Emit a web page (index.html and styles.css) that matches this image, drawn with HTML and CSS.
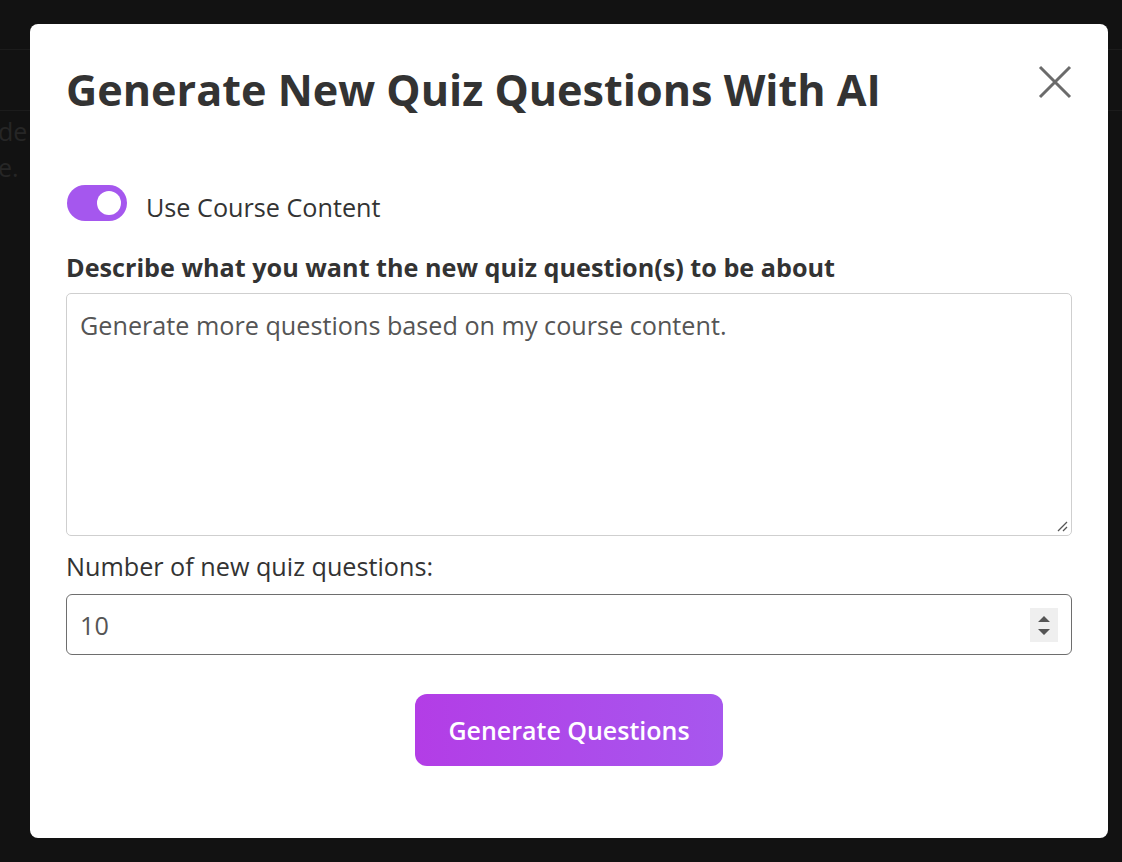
FILE: index.html
```html
<!DOCTYPE html>
<html lang="en">
<head>
<meta charset="utf-8">
<title>Generate New Quiz Questions With AI</title>
<link rel="stylesheet" href="styles.css">
</head>
<body>
<div class="backdrop">
  <div class="bg-page">
    <div class="bg-line l1"></div>
    <div class="bg-line l2"></div>
    <p class="bg-text">de<br>e.</p>
  </div>
  <div class="modal">
    <div class="modal-head">
      <h1 class="title">Generate New Quiz Questions With AI</h1>
      <button class="close" aria-label="Close">
        <svg width="34" height="34" viewBox="0 0 34 34"><path d="M2 2 L32 32 M32 2 L2 32" stroke="#6b6b6b" stroke-width="3" fill="none"/></svg>
      </button>
    </div>
    <div class="toggle-row">
      <span class="toggle"><span class="knob"></span></span>
      <span class="toggle-label">Use Course Content</span>
    </div>
    <label class="field-label">Describe what you want the new quiz question(s) to be about</label>
    <div class="textarea">
      <span class="ta-text">Generate more questions based on my course content.</span>
      <svg class="resize" width="12" height="12" viewBox="0 0 12 12"><path d="M11 2 L2 11 M11 7 L7 11" stroke="#555" stroke-width="1.3" fill="none"/></svg>
    </div>
    <div class="num-label">Number of new quiz questions:</div>
    <div class="num-input">
      <span class="num-val">10</span>
      <span class="spinner">
        <svg width="28" height="34" viewBox="0 0 28 34"><path d="M8 14 L14 8 L20 14 Z M8 21 L20 21 L14 27 Z" fill="#555"/></svg>
      </span>
    </div>
    <div class="actions">
      <button class="primary">Generate Questions</button>
    </div>
  </div>
</div>
</body>
</html>
```
FILE: styles.css
```css
* { box-sizing: border-box; }
html, body { margin: 0; padding: 0; }
body {
  background: #121212;
  font-family: "Open Sans", "Noto Sans", sans-serif;
  width: 1122px;
  height: 862px;
  overflow: hidden;
}
.backdrop {
  position: relative;
  width: 1122px;
  height: 862px;
  padding: 24px 14px 24px 30px;
}
.bg-page {
  position: absolute;
  left: 0; top: 0; right: 0; bottom: 0;
}
.bg-line {
  position: absolute;
  left: 0; width: 100%;
  height: 1px;
  background: #1c1c1c;
}
.l1 { top: 49px; }
.l2 { top: 110px; }
.bg-text {
  position: absolute;
  left: -2px;
  top: 113px;
  margin: 0;
  font-size: 25px;
  line-height: 36px;
  color: #262626;
}
.modal {
  position: relative;
  background: #fff;
  border-radius: 8px;
  width: 1078px;
  height: 814px;
  padding: 38px 36px 0 36px;
  display: flex;
  flex-direction: column;
}
.modal-head {
  display: flex;
  justify-content: space-between;
  align-items: flex-start;
}
.title {
  margin: 0;
  font-size: 43.15px;
  font-weight: 700;
  color: #333;
  line-height: 56px;
}
.close {
  border: 0;
  background: none;
  padding: 0;
  margin: 3px 0 0 0;
  width: 34px;
  height: 34px;
  cursor: pointer;
}
.close svg { display: block; }
.toggle-row {
  display: flex;
  align-items: center;
  gap: 19px;
  margin-top: 67px;
  margin-left: 1px;
}
.toggle {
  position: relative;
  width: 60px;
  height: 36px;
  border-radius: 18px;
  background: #a557ee;
  display: block;
  flex: none;
}
.knob {
  position: absolute;
  right: 6px;
  top: 6px;
  width: 24px;
  height: 24px;
  border-radius: 50%;
  background: #fff;
}
.toggle-label {
  font-size: 25.2px;
  color: #333;
  line-height: 28px;
  padding-top: 8px;
}
.field-label {
  display: block;
  margin-top: 29px;
  font-size: 25.2px;
  font-weight: 700;
  color: #333;
  line-height: 34px;
}
.textarea {
  position: relative;
  margin-top: 9px;
  height: 243px;
  flex: none;
  border: 1px solid #cfcfcf;
  border-radius: 5px;
  padding: 16px 13px;
}
.ta-text {
  font-size: 25.2px;
  color: #555;
  line-height: 30px;
}
.resize {
  position: absolute;
  right: 3px;
  bottom: 3px;
}
.num-label {
  margin-top: 13px;
  font-size: 25.2px;
  color: #333;
  line-height: 34px;
}
.num-input {
  margin-top: 11px;
  height: 61px;
  flex: none;
  border: 1px solid #6e6e6e;
  border-radius: 6px;
  display: flex;
  align-items: center;
  justify-content: space-between;
  padding: 0 13px 0 13px;
}
.num-val {
  font-size: 25.2px;
  color: #555;
}
.spinner {
  display: block;
  width: 28px;
  height: 34px;
  background: #efefef;
}
.spinner svg { display: block; }
.actions {
  display: flex;
  justify-content: center;
  margin-top: 39px;
}
.primary {
  width: 308px;
  height: 72px;
  border: 0;
  border-radius: 12px;
  background: linear-gradient(90deg, #b33de6 0%, #a757ee 100%);
  color: #fff;
  font-family: "Open Sans", "Noto Sans", sans-serif;
  font-size: 25px;
  font-weight: 600;
  cursor: pointer;
}
```
